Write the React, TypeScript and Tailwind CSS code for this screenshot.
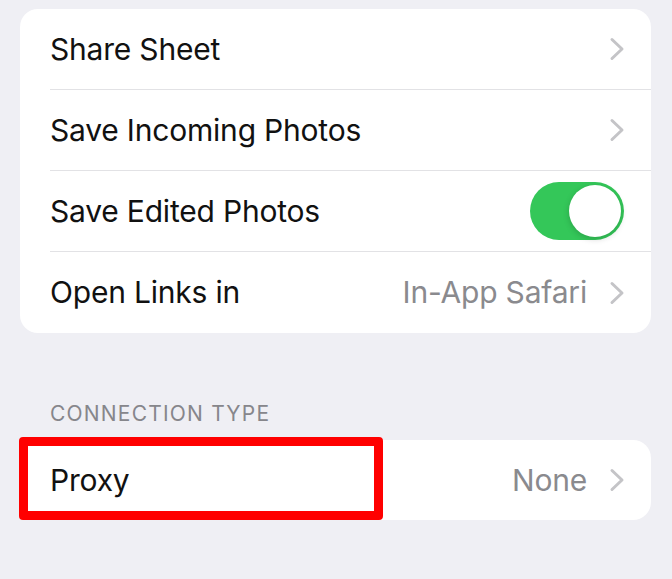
import React from "react";

const font = { fontFamily: "Inter, 'Noto Sans', sans-serif" };

function Chevron() {
  return (
    <svg width="16" height="24" viewBox="0 0 16 24" className="shrink-0">
      <path d="M3 2.5 L13 12 L3 21.5" fill="none" stroke="#c4c4c7" strokeWidth="3" strokeLinecap="round" strokeLinejoin="round" />
    </svg>
  );
}

function Row({ label, value, chevron, toggle, last }: { label: string; value?: string; chevron?: boolean; toggle?: boolean; last?: boolean }) {
  return (
    <div className="pl-[30px]">
      <div className={`flex h-[81px] items-center pr-[26px] ${last ? "" : "border-b border-[#e2e2e5]"}`}>
        <span className="flex-1 text-[30px] text-[#111] tracking-[-0.2px]">{label}</span>
        {value && <span className="mr-[22px] text-[30px] text-[#8a8a8e] tracking-[-0.2px]">{value}</span>}
        {chevron && <Chevron />}
        {toggle && (
          <div className="mr-[1px] flex h-[58px] w-[94px] items-center justify-end rounded-full bg-[#34c759] p-[3px]">
            <div className="h-[52px] w-[52px] rounded-full bg-white shadow-[0_2px_6px_rgba(0,0,0,0.18)]" />
          </div>
        )}
      </div>
    </div>
  );
}

export default function App() {
  return (
    <div className="h-[579px] w-[672px] overflow-hidden bg-[#efeff4] pt-[9px]" style={font}>
      <div className="ml-[20px] mr-[21px] overflow-hidden rounded-[18px] bg-white">
        <Row label="Share Sheet" chevron />
        <Row label="Save Incoming Photos" chevron />
        <Row label="Save Edited Photos" toggle />
        <Row label="Open Links in" value="In-App Safari" chevron last />
      </div>
      <div className="mb-[7px] ml-[50px] mt-[62px] h-[38px] text-[21px] uppercase leading-[38px] tracking-[1.2px] text-[#86868b]">Connection Type</div>
      <div className="relative ml-[20px] mr-[21px] rounded-[18px] bg-white">
        <div className="flex h-[80px] items-center pl-[30px] pr-[26px]">
          <span className="flex-1 text-[30px] text-[#111] tracking-[-0.2px]">Proxy</span>
          <span className="mr-[22px] text-[30px] text-[#8a8a8e] tracking-[-0.2px]">None</span>
          <Chevron />
        </div>
        <div className="absolute left-[-1px] top-[-3px] h-[83px] w-[364px] rounded-[4px] border-[9px] border-[#ff0000]" />
      </div>
    </div>
  );
}
